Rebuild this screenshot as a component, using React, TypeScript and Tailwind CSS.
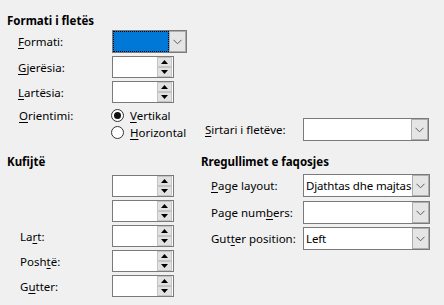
import React from "react";

const U = ({ children }: { children: React.ReactNode }) => (
  <span className="underline underline-offset-[2px] decoration-[1px]">{children}</span>
);

const Chevron = () => (
  <svg width="9" height="6" viewBox="0 0 9 6" className="block">
    <path d="M0.5 0.8 L4.5 4.8 L8.5 0.8" fill="none" stroke="#5a5a5a" strokeWidth="1" />
  </svg>
);

const DropBtn = () => (
  <div className="w-[17px] h-full shrink-0 bg-[#e5e5e5] border border-[#adadad] flex items-center justify-center">
    <Chevron />
  </div>
);

const Dropdown = ({ w, h = 23, text, focused }: { w: number; h?: number; text?: string; focused?: boolean }) => (
  <div
    className="border border-[#7a7a7a] bg-white flex items-stretch"
    style={{ width: w, height: h }}
  >
    {focused ? (
      <div className="flex-1 bg-[#0078d7] border border-dotted border-black" />
    ) : (
      <div className="flex-1 flex items-center pl-[2px] overflow-hidden whitespace-nowrap tracking-[-0.15px]">{text}</div>
    )}
    <DropBtn />
  </div>
);

const Tri = ({ up }: { up?: boolean }) => (
  <svg width="7" height="4" viewBox="0 0 7 4" className="block">
    {up ? <path d="M0 4 L3.5 0 L7 4 Z" fill="#000" /> : <path d="M0 0 L3.5 4 L7 0 Z" fill="#000" />}
  </svg>
);

const Spin = () => (
  <div className="w-[62px] h-[22px] border border-[#7a7a7a] bg-white flex justify-end pr-[1px]">
    <div className="w-[15px] h-full flex flex-col">
      <div className="h-[10px] bg-[#e1e1e1] border border-[#c4c4c4] flex items-center justify-center">
        <Tri up />
      </div>
      <div className="h-[10px] bg-[#e1e1e1] border border-[#c4c4c4] flex items-center justify-center">
        <Tri />
      </div>
    </div>
  </div>
);

const Radio = ({ checked }: { checked?: boolean }) => (
  <div className="w-[13px] h-[13px] rounded-full border border-[#333] bg-white flex items-center justify-center">
    {checked && <div className="w-[7px] h-[7px] rounded-full bg-[#111]" />}
  </div>
);

export default function App() {
  return (
    <div className="w-[444px] h-[305px] bg-[#f0f0f0] text-[11.5px] text-black overflow-hidden font-['Noto_Sans',sans-serif] leading-[17px]">
      <div className="ml-[7px] mt-[12px] h-[17px] font-bold text-[11.5px]">Formati i fletës</div>

      <div className="mt-[1px] flex items-center h-[23px]">
        <div className="w-[112px] pl-[18px]">
          <U>F</U>ormati:
        </div>
        <Dropdown w={75} focused />
      </div>
      <div className="mt-[3px] flex items-center h-[22px]">
        <div className="w-[112px] pl-[18px]">
          <U>G</U>jerësia:
        </div>
        <Spin />
      </div>
      <div className="mt-[3px] flex items-center h-[22px]">
        <div className="w-[112px] pl-[18px]">
          <U>L</U>artësia:
        </div>
        <Spin />
      </div>

      <div className="mt-[4px] flex">
        <div className="w-[111px] pl-[19px] h-[17px] flex items-center">
          <U>O</U>rientimi:
        </div>
        <div className="w-[94px] flex flex-col">
          <div className="h-[17px] flex items-center gap-[6px]">
            <Radio checked />
            <span>
              <U>V</U>ertikal
            </span>
          </div>
          <div className="h-[17px] flex items-center gap-[6px]">
            <Radio />
            <span>
              <U>H</U>orizontal
            </span>
          </div>
        </div>
        <div className="mt-[11px] flex items-center h-[23px]">
          <div className="w-[98px]">
            <U>S</U>irtari i fletëve:
          </div>
          <Dropdown w={126} />
        </div>
      </div>

      <div className="mt-[12px] flex">
        <div className="w-[201px] shrink-0 pl-[7px]">
          <div className="h-[17px] font-bold">Kufijtë</div>
          <div className="mt-[5px] flex flex-col gap-[3px]">
            <div className="flex items-center h-[22px]">
              <div className="w-[105px]" />
              <Spin />
            </div>
            <div className="flex items-center h-[22px]">
              <div className="w-[105px]" />
              <Spin />
            </div>
            <div className="flex items-center h-[22px]">
              <div className="w-[105px] pl-[13px]">
                La<U>r</U>t:
              </div>
              <Spin />
            </div>
            <div className="flex items-center h-[22px]">
              <div className="w-[105px] pl-[13px]">
                Posh<U>t</U>ë:
              </div>
              <Spin />
            </div>
            <div className="flex items-center h-[22px]">
              <div className="w-[105px] pl-[13px]">
                G<U>u</U>tter:
              </div>
              <Spin />
            </div>
          </div>
        </div>
        <div className="flex-1">
          <div className="h-[17px] font-bold">Rregullimet e faqosjes</div>
          <div className="mt-[4px] flex items-center h-[23px]">
            <div className="w-[102px] pl-[10px]">
              <U>P</U>age layout:
            </div>
            <Dropdown w={127} text="Djathtas dhe majtas" />
          </div>
          <div className="mt-[4px] flex items-center h-[23px]">
            <div className="w-[102px] pl-[10px]">
              Page num<U>b</U>ers:
            </div>
            <Dropdown w={127} />
          </div>
          <div className="mt-[3px] flex items-center h-[23px]">
            <div className="w-[102px] pl-[10px]">
              Gut<U>t</U>er position:
            </div>
            <Dropdown w={127} text="Left" />
          </div>
        </div>
      </div>
    </div>
  );
}
